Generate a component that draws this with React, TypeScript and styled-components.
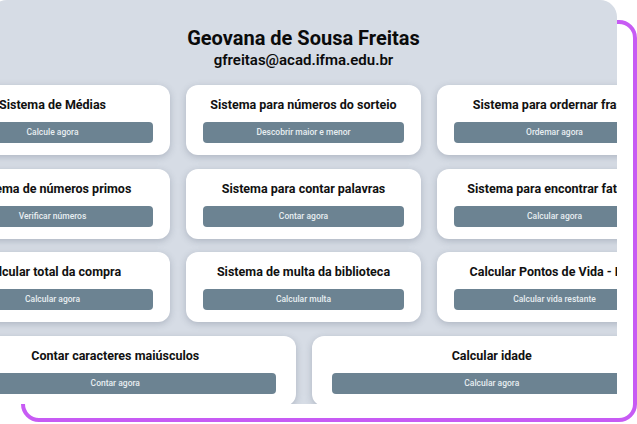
import React from "react";
import styled, { createGlobalStyle } from "styled-components";

const Global = createGlobalStyle`
  html, body { margin: 0; padding: 0; background: #ffffff; }
  body { font-family: Roboto, "Liberation Sans", sans-serif; }
  * { box-sizing: border-box; }
`;

const Stage = styled.div`
  position: relative;
  width: 637px;
  height: 424px;
  overflow: hidden;
  background: #ffffff;
`;

const Frame = styled.div`
  position: absolute;
  left: 21px;
  top: 20px;
  right: 0.5px;
  bottom: 2px;
  border: 4px solid #c75bf4;
  border-radius: 18px;
`;

const Panel = styled.main`
  position: relative;
  z-index: 1;
  margin-left: -10px;
  width: 627px;
  height: 404px;
  overflow: hidden;
  background: #d6dce5;
  border-top-right-radius: 17px;
  border-top-left-radius: 17px;
  display: flex;
  flex-direction: column;
  align-items: center;
  padding-top: 25.5px;
`;

const Name = styled.h1`
  margin: 0;
  font-family: Roboto, sans-serif;
  font-size: 20px;
  line-height: 24px;
  font-weight: 700;
  color: #0b0b0b;
  white-space: nowrap;
`;

const Email = styled.h2`
  margin: 1px 0 0;
  font-family: Roboto, sans-serif;
  font-size: 15px;
  line-height: 18px;
  font-weight: 600;
  color: #0b0b0b;
  white-space: nowrap;
`;

const Grid = styled.section`
  flex: none;
  width: 737px;
  margin-top: 16.5px;
  display: grid;
  grid-template-columns: repeat(6, 1fr);
  column-gap: 16px;
  row-gap: 13.5px;
`;

const Card = styled.div<{ $span: number }>`
  grid-column: span ${(p) => p.$span};
  height: 70px;
  background: #ffffff;
  border-radius: 12px;
  box-shadow: 0 2px 7px rgba(70, 80, 100, 0.28);
  padding: 12px ${(p) => (p.$span > 2 ? 20 : 17)}px;
  display: flex;
  flex-direction: column;
  align-items: stretch;
  gap: 9px;
`;

const CardTitle = styled.h3`
  margin: 0;
  font-family: Roboto, sans-serif;
  font-size: 12.5px;
  line-height: 16px;
  font-weight: 700;
  color: #111111;
  text-align: center;
  white-space: nowrap;
`;

const Action = styled.button`
  height: 21px;
  border: none;
  border-radius: 4px;
  background: #6c8392;
  color: #e8eef1;
  font-family: Roboto, "Liberation Sans", sans-serif;
  font-size: 8.5px;
  font-weight: 500;
  line-height: 21px;
  padding: 0;
  text-align: center;
  white-space: nowrap;
`;

const items: { title: string; action: string; span: number }[] = [
  { title: "Sistema de Médias", action: "Calcule agora", span: 2 },
  { title: "Sistema para números do sorteio", action: "Descobrir maior e menor", span: 2 },
  { title: "Sistema para ordernar frases", action: "Ordemar agora", span: 2 },
  { title: "Sistema de números primos", action: "Verificar números", span: 2 },
  { title: "Sistema para contar palavras", action: "Contar agora", span: 2 },
  { title: "Sistema para encontrar fatorial", action: "Calcular agora", span: 2 },
  { title: "Calcular total da compra", action: "Calcular agora", span: 2 },
  { title: "Sistema de multa da biblioteca", action: "Calcular multa", span: 2 },
  { title: "Calcular Pontos de Vida - RPG", action: "Calcular vida restante", span: 2 },
  { title: "Contar caracteres maiúsculos", action: "Contar agora", span: 3 },
  { title: "Calcular idade", action: "Calcular agora", span: 3 },
];

export default function App() {
  return (
    <Stage>
      <Global />
      <Frame />
      <Panel>
        <Name>Geovana de Sousa Freitas</Name>
        <Email>gfreitas@acad.ifma.edu.br</Email>
        <Grid>
          {items.map((it) => (
            <Card key={it.title} $span={it.span}>
              <CardTitle>{it.title}</CardTitle>
              <Action>{it.action}</Action>
            </Card>
          ))}
        </Grid>
      </Panel>
    </Stage>
  );
}
